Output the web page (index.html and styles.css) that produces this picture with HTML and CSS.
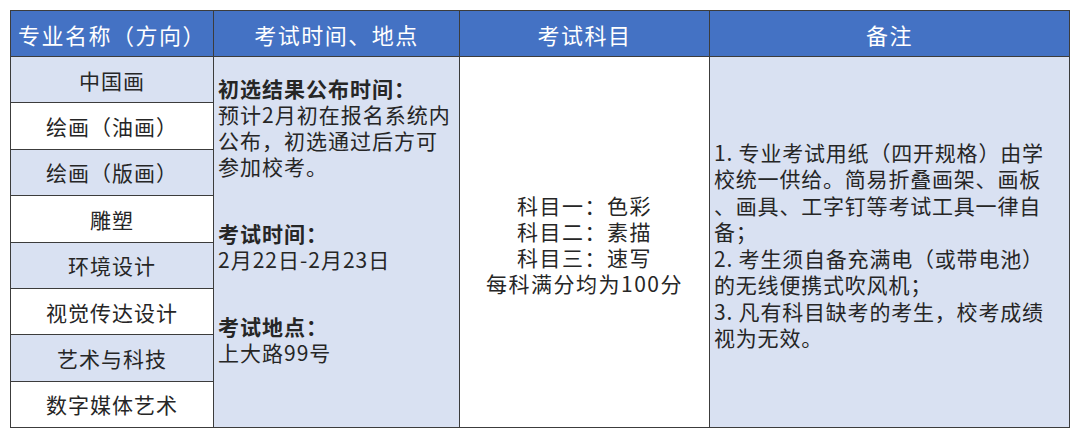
FILE: index.html
```html
<!DOCTYPE html>
<html lang="zh-CN">
<head>
<meta charset="utf-8">
<link rel="stylesheet" href="styles.css">
</head>
<body>
<div class="wrap">
  <div class="table">
    <div class="th c1">专业名称（方向）</div>
    <div class="th c2">考试时间、地点</div>
    <div class="th c3">考试科目</div>
    <div class="th c4">备注</div>

    <div class="major blue r1">中国画</div>
    <div class="major r2">绘画（油画）</div>
    <div class="major blue r3">绘画（版画）</div>
    <div class="major r4">雕塑</div>
    <div class="major blue r5">环境设计</div>
    <div class="major r6">视觉传达设计</div>
    <div class="major blue r7">艺术与科技</div>
    <div class="major r8">数字媒体艺术</div>

    <div class="time blue">
      <p class="para first"><b>初选结果公布时间：</b><br>预计2月初在报名系统内<br>公布，初选通过后方可<br>参加校考。</p>
      <p class="para"><b>考试时间：</b><br>2月22日-2月23日</p>
      <p class="para"><b>考试地点：</b><br>上大路99号</p>
    </div>

    <div class="subjects">
      <p>科目一：色彩<br>科目二：素描<br>科目三：速写<br>每科满分均为100分</p>
    </div>

    <div class="notes blue">
      <p>1. 专业考试用纸（四开规格）由学<br>校统一供给。简易折叠画架、画板<br>、画具、工字钉等考试工具一律自<br>备；<br>2. 考生须自备充满电（或带电池）<br>的无线便携式吹风机；<br>3. 凡有科目缺考的考生，校考成绩<br>视为无效。</p>
    </div>
  </div>
</div>
</body>
</html>
```

FILE: styles.css
```css
html, body {
  margin: 0;
  padding: 0;
  background: #ffffff;
}

body {
  font-family: "Noto Sans CJK SC", "Noto Sans", sans-serif;
  color: #262626;
}

.wrap {
  padding: 10px 10px 11px 10px;
}

.table {
  width: 1058px;
  height: 416px;
  display: grid;
  grid-template-columns: 202px 245px 249px 1fr;
  grid-template-rows: 45px repeat(8, 1fr);
  gap: 1px;
  background: #3c3c3c;
  border: 1.5px solid #3c3c3c;
}

.th {
  background: #4472c4;
  color: #ffffff;
  font-size: 22px;
  display: flex;
  align-items: center;
  justify-content: center;
  letter-spacing: 1.5px;
}

.c1 { grid-column: 1; grid-row: 1; }
.c2 { grid-column: 2; grid-row: 1; }
.c3 { grid-column: 3; grid-row: 1; }
.c4 { grid-column: 4; grid-row: 1; }

.major {
  grid-column: 1;
  background: #ffffff;
  font-size: 21px;
  letter-spacing: 1px;
  display: flex;
  align-items: center;
  justify-content: center;
}

.r1 { grid-row: 2; }
.r2 { grid-row: 3; }
.r3 { grid-row: 4; }
.r4 { grid-row: 5; }
.r5 { grid-row: 6; }
.r6 { grid-row: 7; }
.r7 { grid-row: 8; }
.r8 { grid-row: 9; }

.blue {
  background: #d9e1f2;
}

.time {
  grid-column: 2;
  grid-row: 2 / 10;
  padding: 18px 4px 0 4px;
  font-size: 21px;
  letter-spacing: 1px;
  line-height: 26px;
  white-space: nowrap;
}

.para {
  margin: 41px 0 0 0;
}

.para.first {
  margin-top: 0;
}

.time b {
  font-weight: 700;
}

.subjects {
  grid-column: 3;
  grid-row: 2 / 10;
  background: #ffffff;
  display: flex;
  align-items: center;
  justify-content: center;
  text-align: center;
  font-size: 21px;
  letter-spacing: 1.5px;
  line-height: 26px;
}

.subjects p {
  margin: 0;
  padding-top: 3px;
}

.notes {
  grid-column: 4;
  grid-row: 2 / 10;
  display: flex;
  align-items: center;
  padding: 0 4px;
  font-size: 21px;
  letter-spacing: 0.8px;
  line-height: 26.5px;
  white-space: nowrap;
}

.notes p {
  margin: 0;
  padding-top: 5px;
}
```
